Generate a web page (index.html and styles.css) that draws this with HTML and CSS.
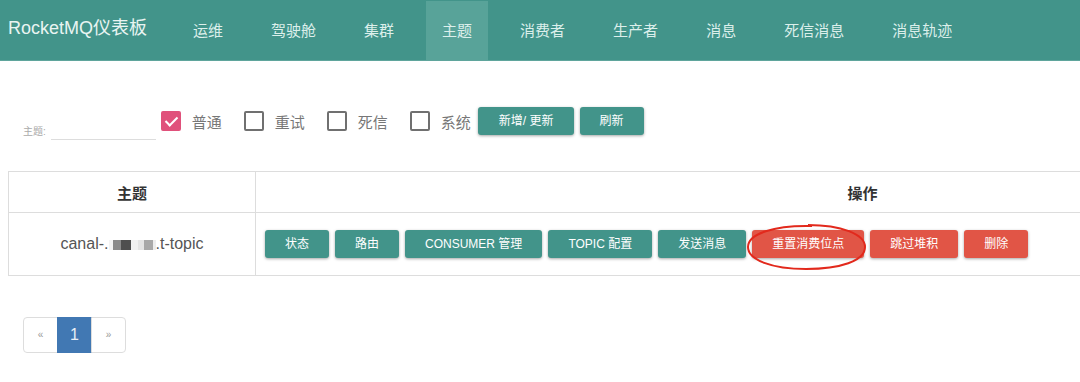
FILE: index.html
```html
<!DOCTYPE html>
<html lang="zh-CN">

<head>
    <meta charset="UTF-8">
    <meta name="viewport" content="width=device-width, initial-scale=1.0">
    <title>RocketMQ仪表板</title>
    <link rel="stylesheet" href="styles.css">
</head>

<body>
    <!-- 顶部导航 -->
    <div class="navbar">
        <div class="brand">RocketMQ仪表板</div>
        <ul class="nav">
            <li>运维</li>
            <li>驾驶舱</li>
            <li>集群</li>
            <li class="active">主题</li>
            <li>消费者</li>
            <li>生产者</li>
            <li>消息</li>
            <li>死信消息</li>
            <li>消息轨迹</li>
        </ul>
    </div>

    <div class="content">
        <!-- 过滤条件 -->
        <div class="filter">
            <div class="field">
                <label>主题:</label>
                <span class="line"></span>
            </div>
            <div class="check checked"><span class="box"></span>普通</div>
            <div class="check"><span class="box"></span>重试</div>
            <div class="check"><span class="box"></span>死信</div>
            <div class="check"><span class="box"></span>系统</div>
            <a class="btn" href="javascript:;">新增/ 更新</a>
            <a class="btn" href="javascript:;">刷新</a>
        </div>

        <div class="table-wrap">
            <table class="list">
                <tr>
                    <th class="col-topic">主题</th>
                    <th>操作</th>
                </tr>
                <tr>
                    <td class="topic">canal-.<span class="mosaic"><i class="m1"></i><i class="m2"></i><i class="m3"></i><i class="m4"></i><i class="m5"></i><i class="m6"></i><i class="m7"></i></span>.t-topic</td>
                    <td>
                        <div class="actions">
                            <a class="btn" href="javascript:;">状态</a>
                            <a class="btn" href="javascript:;">路由</a>
                            <a class="btn" href="javascript:;">CONSUMER 管理</a>
                            <a class="btn" href="javascript:;">TOPIC 配置</a>
                            <a class="btn" href="javascript:;">发送消息</a>
                            <a class="btn red mark" href="javascript:;">重置消费位点<svg class="circle" width="122" height="48" viewBox="0 0 122 48"><path d="M62 2 C 95 2, 119 11, 119 24 C 119 38, 94 46, 60 46 C 26 46, 2 37, 2 24 C 2 11, 28 2, 66 3" fill="none" stroke="#e2291c" stroke-width="2" /></svg></a>
                            <a class="btn red" href="javascript:;">跳过堆积</a>
                            <a class="btn red" href="javascript:;">删除</a>
                        </div>
                    </td>
                </tr>
            </table>
        </div>

        <!-- 分页 -->
        <ul class="pager">
            <li>«</li>
            <li class="active">1</li>
            <li>»</li>
        </ul>
    </div>
</body>

</html>
```

FILE: styles.css
```css
html,
body {
    margin: 0;
    background-color: #fff;
    font-family: "Liberation Sans", "Noto Sans CJK SC", sans-serif;
    overflow: hidden;
}

.navbar {
    height: 60px;
    background-color: #42948a;
    border-bottom: 1px solid #5fa59c;
    display: flex;
    align-items: stretch;
}

.brand {
    padding-left: 8px;
    margin-right: 22px;
    font-size: 18px;
    line-height: 56px;
    color: #e9f4f2;
}

.nav {
    list-style: none;
    margin: 0;
    padding: 0;
    display: flex;
}

.nav li {
    margin: 1px 8px 0;
    padding: 0 16px;
    font-size: 15px;
    line-height: 59px;
    color: #dcefeb;
}

.nav li.active {
    background-color: #58a399;
}

.content {
    padding: 46px 0 0;
}

.filter {
    display: flex;
    align-items: center;
    height: 28px;
    padding-left: 23px;
}

.field {
    display: flex;
    align-items: flex-end;
    align-self: flex-end;
    margin-bottom: -5px;
    margin-right: 5px;
}

.field label {
    font-size: 10px;
    color: #aaa;
    margin-right: 5px;
    line-height: 14px;
    margin-bottom: 1px;
}

.field .line {
    width: 105px;
    height: 20px;
    border-bottom: 1px solid #ddd;
}

.check {
    display: flex;
    align-items: center;
    font-size: 15px;
    color: #777;
    margin-right: 22px;
}

.check:nth-child(5) {
    margin-right: 7px;
}

.check .box {
    width: 16px;
    height: 16px;
    border: 2px solid #707070;
    border-radius: 2px;
    margin-right: 11px;
    position: relative;
}

.check.checked .box {
    background-color: #e0517b;
    border-color: #e0517b;
}

.check.checked .box::after {
    content: "";
    position: absolute;
    left: 5px;
    top: 1px;
    width: 5px;
    height: 10px;
    border-right: 2px solid #fff;
    border-bottom: 2px solid #fff;
    transform: rotate(45deg);
}

.btn {
    display: inline-block;
    height: 28px;
    line-height: 28px;
    padding: 0 20px;
    font-size: 12px;
    color: #fff;
    text-decoration: none;
    background-color: #42948a;
    border-radius: 3px;
    box-shadow: 0 1px 3px rgba(0, 0, 0, .35);
    white-space: nowrap;
}

.filter .btn {
    margin-right: 6px;
}

.filter .btn:first-of-type {
    padding: 0 20px 0 21px;
}

.btn.red {
    background-color: #e15546;
}

.table-wrap {
    margin-top: 36px;
    padding-left: 8px;
    overflow: hidden;
}

.list {
    width: 1462px;
    border-collapse: collapse;
    border: 1px solid #ddd;
}

.list th,
.list td {
    border: 1px solid #ddd;
    text-align: center;
}

.list th {
    height: 38px;
    font-size: 15px;
    color: #333;
}

.list .col-topic {
    width: 244px;
}

.list td {
    height: 62px;
    padding: 0 0 0 9px;
}

.list td.topic {
    padding: 0;
    font-size: 16px;
    color: #555;
}

.mosaic {
    display: inline-block;
    vertical-align: -1px;
}

.mosaic i {
    display: inline-block;
    height: 10px;
}

.mosaic .m1 { width: 4px; background-color: #f3f3f3; }
.mosaic .m2 { width: 8px; background-color: #8a8a8a; }
.mosaic .m3 { width: 10px; background-color: #4f4f4f; }
.mosaic .m4 { width: 7px; background-color: #f1f1f1; }
.mosaic .m5 { width: 6px; background-color: #e4e4e4; }
.mosaic .m6 { width: 9px; background-color: #a8a8a8; }
.mosaic .m7 { width: 3px; background-color: #ededed; }

.actions {
    display: flex;
    gap: 6px;
}

.actions .mark {
    position: relative;
}

.circle {
    position: absolute;
    left: -6px;
    top: -7px;
}

.pager {
    list-style: none;
    display: flex;
    margin: 41px 0 0 23px;
    padding: 0;
}

.pager li {
    width: 33px;
    height: 34px;
    line-height: 34px;
    text-align: center;
    font-size: 10px;
    color: #999;
    border: 1px solid #ddd;
    margin-left: -1px;
}

.pager li:first-child {
    border-radius: 4px 0 0 4px;
    margin-left: 0;
}

.pager li:last-child {
    border-radius: 0 4px 4px 0;
}

.pager li.active {
    background-color: #4178b3;
    border-color: #4178b3;
    color: #e8eef6;
    font-size: 16px;
}
```
